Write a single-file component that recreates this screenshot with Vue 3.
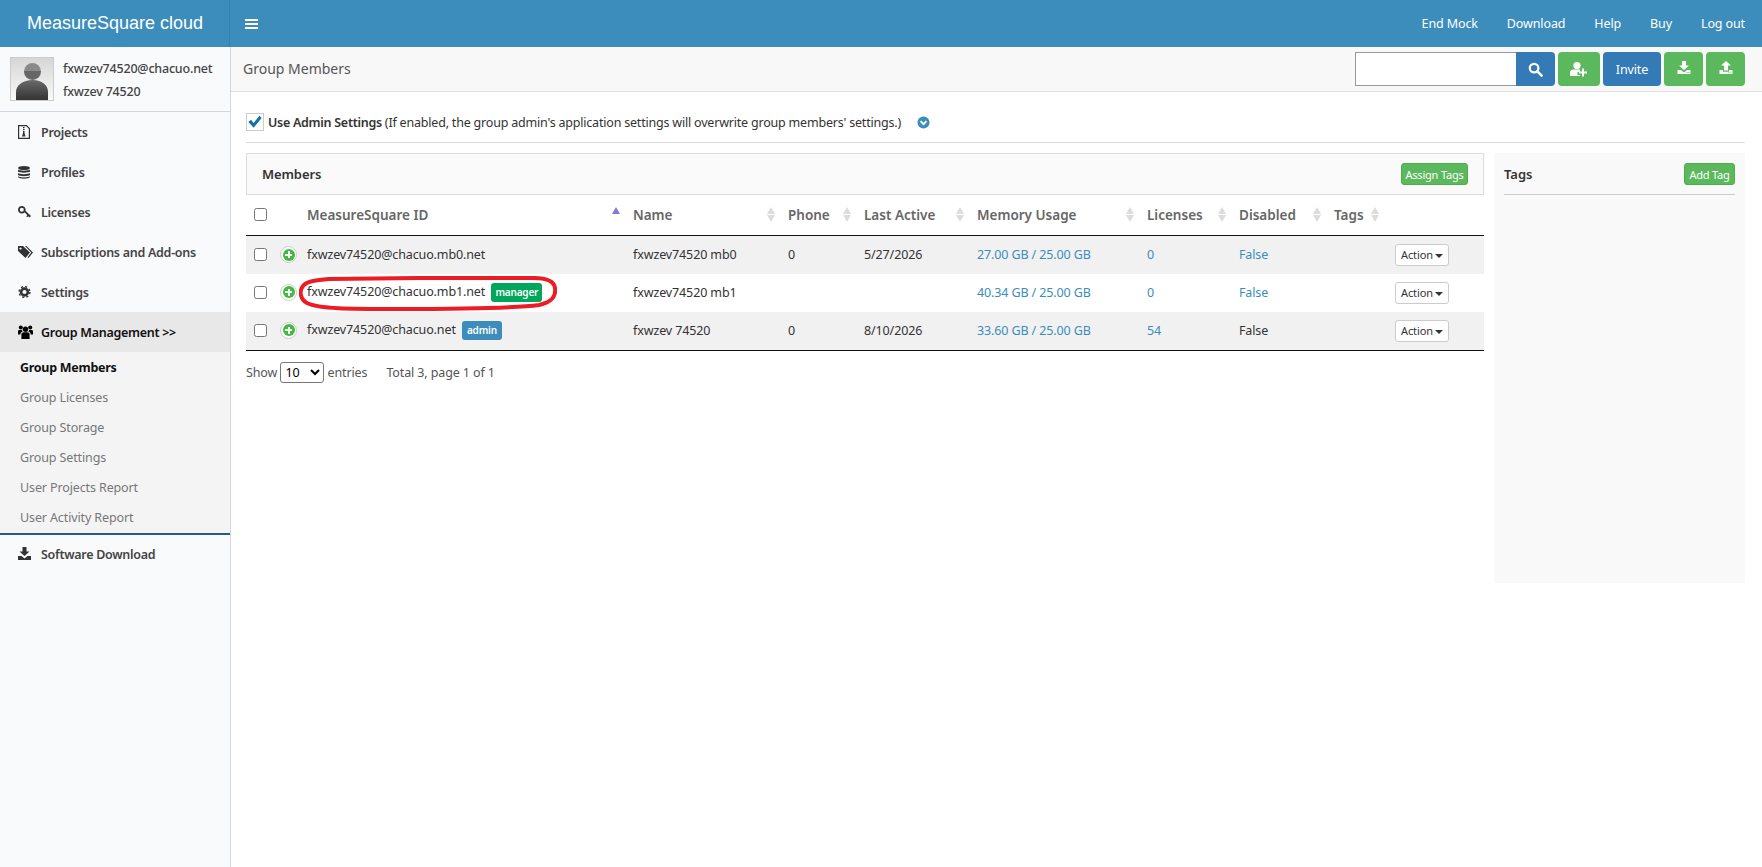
<template>
  <div class="app">
    <header class="topbar">
      <div class="brand">MeasureSquare cloud</div>
      <button class="burger" aria-label="Toggle menu"><span></span><span></span><span></span></button>
      <nav class="topnav">
        <a v-for="l in topLinks" :key="l">{{ l }}</a>
      </nav>
    </header>

    <div class="body">
      <aside class="sidebar">
        <div class="user">
          <div class="avatar">
            <svg viewBox="0 0 42 42" width="42" height="42">
              <defs>
                <linearGradient id="sil" x1="0" y1="0" x2="0" y2="1">
                  <stop offset="0" stop-color="#6a6a6a" />
                  <stop offset="1" stop-color="#333" />
                </linearGradient>
                <linearGradient id="head" x1="0" y1="0" x2="0" y2="1">
                  <stop offset="0" stop-color="#8a8a8a" />
                  <stop offset=".5" stop-color="#8a8a8a" />
                  <stop offset=".5" stop-color="#666" />
                  <stop offset="1" stop-color="#666" />
                </linearGradient>
              </defs>
              <circle cx="21.5" cy="13.5" r="8.5" fill="url(#head)" />
              <path d="M5 42V34C5 27 12 22 21.5 22S37 27 37 34V42Z" fill="url(#sil)" />
            </svg>
          </div>
          <div class="user-text">
            <div>fxwzev74520@chacuo.net</div>
            <div>fxwzev 74520</div>
          </div>
        </div>
        <ul class="menu">
          <li v-for="m in menu" :key="m.label" class="menu-item">
            <svg class="menu-icon" viewBox="0 0 16 16" width="16" height="16" v-html="m.icon"></svg>
            {{ m.label }}
          </li>
          <li class="menu-item active">
            <svg class="menu-icon users" viewBox="0 0 16 16" width="16" height="16">
              <circle cx="7.5" cy="5.2" r="2.7" /><circle cx="2.8" cy="3.6" r="2" /><circle cx="12.2" cy="3.6" r="2" />
              <path d="M3.4 15V10.6C3.4 9 4.6 8.2 5.6 8.2H9.4C10.4 8.2 11.6 9 11.6 10.6V15Z" />
              <path d="M0 10.5V7.4C0 6.4 .8 6 1.6 6H3.9C4 6.8 4.3 7.2 4.7 7.6C3 8 2.4 9 2.4 10.5ZM15 10.5V7.4C15 6.4 14.2 6 13.4 6H11.1C11 6.8 10.7 7.2 10.3 7.6C12 8 12.6 9 12.6 10.5Z" />
            </svg>
            Group Management &gt;&gt;
          </li>
        </ul>
        <ul class="submenu">
          <li v-for="(s, i) in subItems" :key="s" :class="{ current: i === 0 }">{{ s }}</li>
        </ul>
        <div class="menu-item download">
          <svg class="menu-icon" viewBox="0 0 16 16" width="16" height="16">
            <path d="M4.5 1H8.5V5.5H11.5L6.5 10L1.5 5.5H4.5Z" /><path d="M0 10H3.5L6.5 12.5L9.5 10H13V14H0Z" />
          </svg>
          Software Download
        </div>
      </aside>

      <main class="main">
        <div class="page-head">
          <h1>Group Members</h1>
          <div class="tools">
            <div class="search">
              <input type="text" />
              <button class="btn blue search-btn" aria-label="Search">
                <svg viewBox="0 0 16 16" width="15" height="15"><circle cx="6.5" cy="6.5" r="4.6" fill="none" stroke="#fff" stroke-width="2.4" /><path d="M10 10L14.5 14.5" stroke="#fff" stroke-width="2.8" stroke-linecap="round" /></svg>
              </button>
            </div>
            <button class="btn green icon-wide" aria-label="Add user">
              <svg viewBox="0 0 18 16" width="18" height="16" fill="#fff"><circle cx="7" cy="4.6" r="3.6" /><path d="M0 15V11.5C0 9.5 1.6 8.5 3.5 8.5H10V11H7.5V14H10V15Z" /><path d="M12 7.5H14V10.5H17V12.5H14V15.5H12V12.5H9V10.5H12Z" /></svg>
            </button>
            <button class="btn blue invite">Invite</button>
            <button class="btn green icon-btn" aria-label="Download">
              <svg viewBox="0 0 14 14" width="14" height="14" fill="#fff"><path d="M5 0H9V4.5H12L7 9L2 4.5H5Z" /><path d="M0.500 9H4L7 11.500L10 9H13.500V13H0.500Z" /><path d="M9.500 11H10.500V12H9.500ZM11.500 11H12.500V12H11.500Z" fill="#5cb85c" /></svg>
            </button>
            <button class="btn green icon-btn" aria-label="Upload">
              <svg viewBox="0 0 14 14" width="14" height="14" fill="#fff"><path d="M7 0L12 4.500H9V9.500H5V4.500H2Z" /><path d="M0.500 9H4V10.800H10V9H13.500V13H0.500Z" /><path d="M9.500 11.200H10.500V12.200H9.500ZM11.500 11.200H12.500V12.200H11.500Z" fill="#5cb85c" /></svg>
            </button>
          </div>
        </div>

        <div class="content">
          <div class="admin-row">
            <span class="fake-check">
              <svg viewBox="0 0 18 18" width="16" height="16"><path d="M1.5 9L4.5 6.5L7.5 10L14 2L16.5 4.5L7.5 15.5Z" fill="#1272a8" /></svg>
            </span>
            <b>Use Admin Settings</b>
            <span class="hint">(If enabled, the group admin's application settings will overwrite group members' settings.)</span>
            <svg class="chev" viewBox="0 0 14 14" width="13" height="13"><circle cx="7" cy="7" r="6.5" fill="#3c8dbc" /><path d="M3.8 5.6L7 8.8L10.2 5.6" fill="none" stroke="#fff" stroke-width="2" /></svg>
          </div>

          <div class="columns">
            <section class="members">
              <div class="members-head">
                <h2>Members</h2>
                <button class="btn green small assign">Assign Tags</button>
              </div>
              <table class="grid">
                <colgroup>
                  <col v-for="w in colWidths" :key="w.key" :style="{ width: w.w + 'px' }" />
                </colgroup>
                <thead>
                  <tr>
                    <th class="check-cell"><input type="checkbox" /></th>
                    <th v-for="c in columns" :key="c" :class="{ sorted: c === 'MeasureSquare ID' }">
                      {{ c }}<span class="sort"></span>
                    </th>
                    <th></th>
                  </tr>
                </thead>
                <tbody>
                  <tr v-for="r in rows" :key="r.id">
                    <td class="check-cell">
                      <input type="checkbox" />
                      <span class="expand"><i></i></span>
                    </td>
                    <td class="id-cell">
                      {{ r.id }}
                      <span v-if="r.role" class="role" :class="r.role">{{ r.role }}</span>
                      <svg v-if="r.role === 'manager'" class="marker" viewBox="0 0 258 35" width="258" height="35">
                        <path d="M30 3L120 2H235C248 2 255 5 256 12C257 20 254 26 240 29C210 33 150 33 100 33C50 33 20 33 8 27C1 23 0 15 4 10C8 5 18 4 30 3Z" fill="none" stroke="#ed1c24" stroke-width="4" />
                      </svg>
                    </td>
                    <td>{{ r.name }}</td>
                    <td>{{ r.phone }}</td>
                    <td>{{ r.last }}</td>
                    <td class="link">{{ r.memory }}</td>
                    <td class="link">{{ r.licenses }}</td>
                    <td :class="{ link: r.disabledLink }">False</td>
                    <td></td>
                    <td class="action-cell"><button class="action">Action<span class="caret"></span></button></td>
                  </tr>
                </tbody>
              </table>
              <div class="pager">
                <label>Show
                  <select><option>10</option></select>
                  entries</label>
                <span class="total">Total 3, page 1 of 1</span>
              </div>
            </section>

            <aside class="tags">
              <div class="tags-head">
                <h3>Tags</h3>
                <button class="btn green small add">Add Tag</button>
              </div>
            </aside>
          </div>
        </div>
      </main>
    </div>
  </div>
</template>

<script setup>
const topLinks = ['End Mock', 'Download', 'Help', 'Buy', 'Log out']

const menu = [
  { label: 'Projects', icon: '<path d="M.6 1.600H8.500L11.400 4.500V14.400H.6Z" fill="none" stroke="currentColor" stroke-width="1.200"/><path d="M5 3H6.500V4.300H5ZM5 5H6.500V6.300H5ZM5 7H6.500V9L7.500 12.500H4L5 9Z"/>' },
  { label: 'Profiles', icon: '<ellipse cx="6" cy="4" rx="6" ry="2"/><path d="M0 5.500C1 7 11 7 12 5.500V7.500C11 9 1 9 0 7.500ZM0 9C1 10.500 11 10.500 12 9V11C11 12.500 1 12.500 0 11ZM0 12.300C1 13.800 11 13.800 12 12.300V13C11 15.300 1 15.300 0 13Z"/>' },
  { label: 'Licenses', icon: '<circle cx="3.800" cy="5.800" r="2.900" fill="none" stroke="currentColor" stroke-width="1.800"/><path d="M6 7.500L7.200 6.500L13 12L11.500 13.500L10.300 12.300L9.300 13.300L8.300 12.300L9.300 11.300Z"/>' },
  { label: 'Subscriptions and Add-ons', icon: '<path d="M0 2H5L12 8.500L7.500 14L0 7ZM2.500 3.400A1.100 1.100 0 1 0 2.510 3.400Z" fill-rule="evenodd"/><path d="M7 2H8.500L15 8.500L10.500 14L9.500 13.300L13.300 8.500Z"/>' },
  { label: 'Settings', icon: '<circle cx="6.500" cy="8" r="3.400" fill="none" stroke="currentColor" stroke-width="2.600"/><circle cx="6.500" cy="8" r="5.400" fill="none" stroke="currentColor" stroke-width="1.400" stroke-dasharray="2.120 2.120"/>' }
]

const subItems = ['Group Members', 'Group Licenses', 'Group Storage', 'Group Settings', 'User Projects Report', 'User Activity Report']

const columns = ['MeasureSquare ID', 'Name', 'Phone', 'Last Active', 'Memory Usage', 'Licenses', 'Disabled', 'Tags']

const colWidths = [53, 326, 155, 76, 113, 170, 92, 95, 58, 100].map((w, i) => ({ key: i, w }))

const rows = [
  { id: 'fxwzev74520@chacuo.mb0.net', name: 'fxwzev74520 mb0', phone: '0', last: '5/27/2026', memory: '27.00 GB / 25.00 GB', licenses: '0', disabledLink: true },
  { id: 'fxwzev74520@chacuo.mb1.net', role: 'manager', name: 'fxwzev74520 mb1', phone: '', last: '', memory: '40.34 GB / 25.00 GB', licenses: '0', disabledLink: true },
  { id: 'fxwzev74520@chacuo.net', role: 'admin', name: 'fxwzev 74520', phone: '0', last: '8/10/2026', memory: '33.60 GB / 25.00 GB', licenses: '54', disabledLink: false }
]
</script>

<style>
html, body {
  margin: 0;
  background: #fff;
}
</style>

<style scoped>
.app {
  min-height: 867px;
  display: flex;
  flex-direction: column;
  font-family: "Noto Sans", "Open Sans", sans-serif;
  font-size: 12.5px;
  letter-spacing: -0.12px;
  color: #333;
}

.topbar {
  height: 47px;
  display: flex;
  align-items: center;
  background: #3c8dbc;
  color: #fff;
}

.brand {
  width: 230px;
  box-sizing: border-box;
  padding-left: 27px;
  font-family: "Liberation Sans", Arial, sans-serif;
  font-size: 18px;
  letter-spacing: 0;
  line-height: 47px;
  border-right: 1px solid #367fa9;
}

.burger {
  margin-left: 15px;
  padding: 0;
  width: 13px;
  display: flex;
  flex-direction: column;
  gap: 2px;
  background: none;
  border: 0;
}

.burger span {
  height: 2px;
  background: #fff;
}

.topnav {
  margin-left: auto;
  padding-right: 17px;
  display: flex;
  gap: 29px;
}

.body {
  flex: 1;
  display: flex;
}

.sidebar {
  width: 231px;
  flex: none;
  box-sizing: border-box;
  background: #f9fafc;
  border-right: 1px solid #d2d6de;
}

.user {
  height: 65px;
  box-sizing: border-box;
  padding: 10px;
  display: flex;
  gap: 9px;
  border-bottom: 1px solid #d2d6de;
}

.avatar {
  width: 44px;
  height: 44px;
  flex: none;
  box-sizing: border-box;
  background: linear-gradient(#d6d6d6, #fafafa);
  border: 1px solid #ccc;
  line-height: 0;
  overflow: hidden;
}

.user-text {
  line-height: 23px;
  font-weight: 500;
  letter-spacing: -0.2px;
  color: #444;
}

.menu {
  list-style: none;
  margin: 0;
  padding: 0;
}

.menu-item {
  height: 40px;
  box-sizing: border-box;
  padding-left: 18px;
  display: flex;
  align-items: center;
  gap: 7px;
  font-weight: 600;
  letter-spacing: -0.28px;
  color: #444;
}

.menu-icon {
  width: 16px;
  height: 16px;
  fill: #333;
  color: #333;
  flex: none;
}

.menu-icon.users {
  fill: #000;
}

.menu-item.active {
  background: #e8e8e8;
  color: #111;
}

.submenu {
  list-style: none;
  margin: 0;
  padding: 1px 0 0;
  background: #f4f4f5;
  border-bottom: 2px solid #265a88;
}

.submenu li {
  height: 30px;
  line-height: 30px;
  padding-left: 20px;
  color: #777;
}

.submenu li.current {
  font-weight: 700;
  letter-spacing: -0.28px;
  color: #111;
}

.download {
  height: 38px;
}

.main {
  flex: 1;
  min-width: 0;
}

.page-head {
  height: 45px;
  box-sizing: border-box;
  padding: 5px 17px 0 12px;
  display: flex;
  justify-content: space-between;
  align-items: flex-start;
  background: #f8f8f8;
  border-bottom: 1px solid #e2e2e2;
}

.page-head h1 {
  margin: 0;
  font-size: 14px;
  font-weight: 400;
  line-height: 34px;
  letter-spacing: 0;
  color: #555;
}

.tools {
  display: flex;
  gap: 3px;
  height: 34px;
}

.search {
  display: flex;
}

.search input {
  width: 161px;
  height: 34px;
  box-sizing: border-box;
  border: 1px solid #999;
  border-right: 0;
  outline: 0;
  padding: 0 6px;
}

.btn {
  border: 0;
  color: #fff;
  border-radius: 4px;
  font: inherit;
  letter-spacing: inherit;
  padding: 0;
  display: inline-flex;
  align-items: center;
  justify-content: center;
}

.blue { background: #337ab7; }
.green { background: #5cb85c; }

.search-btn {
  width: 39px;
  height: 34px;
  border-radius: 0 4px 4px 0;
}

.icon-wide { width: 42px; height: 34px; }
.invite { width: 58px; height: 34px; }
.icon-btn { width: 39px; height: 34px; }
.icon-btn svg { margin-bottom: 3px; }

.small {
  font-size: 11px;
  height: 22px;
  padding: 0;
  border-radius: 3px;
  border: 1px solid #4cae4c;
  letter-spacing: -0.2px;
}

.assign { width: 67px; }
.add { width: 51px; }

.content {
  padding: 20px 17px 0 15px;
}

.admin-row {
  display: flex;
  align-items: center;
  gap: 3px;
  height: 20px;
  padding: 0 0 10px;
  border-bottom: 1px solid #ddd;
}

.admin-row b {
  font-weight: 600;
  letter-spacing: -0.28px;
}

.hint {
  letter-spacing: -0.2px;
}

.fake-check {
  width: 18px;
  height: 18px;
  box-sizing: border-box;
  display: inline-flex;
  align-items: center;
  justify-content: center;
  border: 1px solid #ccc;
  background: #fff;
  margin-right: 1px;
}

.chev {
  margin-left: 13px;
}

.columns {
  display: flex;
  gap: 10px;
  margin-top: 10px;
}

.members {
  width: 1238px;
  flex: none;
}

.members-head {
  height: 42px;
  box-sizing: border-box;
  padding: 0 15px;
  display: flex;
  justify-content: space-between;
  align-items: center;
  background: #fafafa;
  border: 1px solid #ddd;
}

.members-head h2 {
  margin: 0;
  font-size: 13px;
  font-weight: 600;
  letter-spacing: -0.1px;
  color: #333;
}

.grid {
  width: 1238px;
  table-layout: fixed;
  border-collapse: collapse;
}

.grid th {
  position: relative;
  height: 40px;
  padding: 0 8px;
  text-align: left;
  font-size: 13.5px;
  font-weight: 600;
  letter-spacing: 0;
  color: #666;
  border-bottom: 1px solid #111;
  white-space: nowrap;
}

.grid td {
  height: 38px;
  padding: 0 8px;
  box-sizing: border-box;
  white-space: nowrap;
}

.grid tbody tr:nth-child(odd) {
  background: #f1f1f1;
}

.grid tbody tr:last-child td {
  height: 39px;
  border-bottom: 1px solid #111;
}

.grid input[type="checkbox"] {
  display: block;
  margin: 0;
  width: 13px;
  height: 13px;
}

.grid th input[type="checkbox"] {
  margin-top: -2px;
}

.check-cell {
  position: relative;
}

.expand {
  position: absolute;
  left: 34px;
  top: 10px;
  width: 17px;
  height: 17px;
  box-sizing: border-box;
  border-radius: 50%;
  background: #fff;
  border: 1px solid #ccc;
  display: flex;
  align-items: center;
  justify-content: center;
}

.expand i {
  position: relative;
  width: 12px;
  height: 12px;
  border-radius: 50%;
  background: #3fbb3f;
}

.expand i::before,
.expand i::after {
  content: "";
  position: absolute;
  background: #fff;
}

.expand i::before {
  left: 2.5px;
  top: 5px;
  width: 7px;
  height: 2px;
}

.expand i::after {
  left: 5px;
  top: 2.5px;
  width: 2px;
  height: 7px;
}

.sort {
  position: absolute;
  right: 5px;
  top: 12px;
  width: 8px;
  height: 15px;
}

.sort::before,
.sort::after {
  content: "";
  position: absolute;
  left: 0;
  border-left: 4px solid transparent;
  border-right: 4px solid transparent;
}

.sort::before {
  top: 0;
  border-bottom: 7px solid #dcdcdc;
}

.sort::after {
  bottom: 0;
  border-top: 7px solid #dcdcdc;
}

.sorted .sort::before {
  border-bottom-color: #7b7bdc;
}

.sorted .sort::after {
  display: none;
}

.id-cell {
  position: relative;
}

.role {
  display: inline-block;
  margin-left: 3px;
  padding: 0;
  height: 19px;
  line-height: 19px;
  text-align: center;
  border-radius: 3px;
  font-size: 10px;
  font-weight: 600;
  letter-spacing: -0.2px;
  color: #fff;
  vertical-align: middle;
}

.role.manager { background: #00a65a; width: 51px; }
.role.admin { background: #3c8dbc; width: 40px; }

.marker {
  position: absolute;
  left: 0;
  top: 2px;
  pointer-events: none;
}

.link {
  color: #3c8dbc;
}

.action-cell {
  padding: 0 0 0 11px !important;
}

.action {
  display: block;
  height: 22px;
  width: 54px;
  padding: 0;
  font: inherit;
  font-size: 11px;
  letter-spacing: -0.1px;
  color: #333;
  background: #fff;
  border: 1px solid #ccc;
  border-radius: 3px;
}

.caret {
  display: inline-block;
  margin-left: 2px;
  vertical-align: middle;
  border-top: 4px solid #333;
  border-left: 4px solid transparent;
  border-right: 4px solid transparent;
}

.pager {
  margin-top: 11px;
  display: flex;
  align-items: center;
  gap: 19px;
  color: #555;
}

.pager select {
  width: 44px;
  height: 21px;
  font: inherit;
  margin: 0;
  background: #fff;
  border: 1px solid #777;
  border-radius: 3px;
}

.tags {
  width: 251px;
  height: 430px;
  box-sizing: border-box;
  padding: 10px;
  background: #f9f9f9;
}

.tags-head {
  height: 31px;
  display: flex;
  justify-content: space-between;
  align-items: flex-start;
  border-bottom: 1px solid #ccc;
}

.tags-head h3 {
  margin: 0;
  font-size: 13px;
  font-weight: 600;
  line-height: 22px;
  letter-spacing: 0;
  color: #333;
}
</style>
